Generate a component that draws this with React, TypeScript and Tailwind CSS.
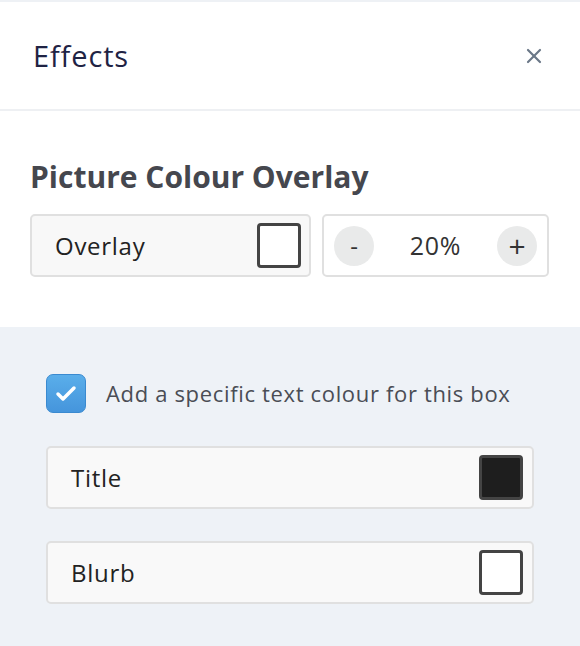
import { Check, X } from "lucide-react";

function Swatch({ fill }: { fill: string }) {
  return (
    <span
      className={`block h-[45px] w-[44px] rounded-[4px] border-[3px] border-[#444] ${fill}`}
    />
  );
}

function ColourRow({ label, fill }: { label: string; fill: string }) {
  return (
    <div className="flex h-[63px] items-center justify-between rounded-[5px] border-2 border-[#e0e0e0] bg-[#f9f9f9] pl-[23px] pr-[9px]">
      <span className="text-[24px] tracking-[0.03em] text-[#222]">{label}</span>
      <Swatch fill={fill} />
    </div>
  );
}

export default function App() {
  return (
    <div
      className="flex h-[646px] w-[580px] flex-col overflow-hidden bg-white"
      style={{ fontFamily: "'Open Sans', Lato, sans-serif" }}
    >
      <div className="h-[2px] bg-[#eef1f5]" />

      {/* header */}
      <div className="flex h-[109px] items-center justify-between border-b-2 border-[#eef0f3] pl-[33px] pr-[34px]">
        <h1 className="text-[29px] leading-none tracking-[0.03em] text-[#1f2344]">Effects</h1>
        <X className="h-[24px] w-[24px] text-[#6b7888]" strokeWidth={2.2} />
      </div>

      {/* overlay */}
      <div className="flex h-[216px] flex-col px-[30px] pt-[51px]">
        <h2 className="text-[30px] font-bold leading-none text-[#45474e]">
          Picture Colour Overlay
        </h2>
        <div className="mt-[22px] flex gap-[11px]">
          <div className="flex h-[63px] w-[281px] items-center justify-between rounded-[5px] border-2 border-[#e0e0e0] bg-[#f8f8f8] pl-[23px] pr-[8px]">
            <span className="text-[24px] tracking-[0.03em] text-[#222]">Overlay</span>
            <Swatch fill="bg-white" />
          </div>
          <div className="flex h-[63px] w-[227px] items-center justify-between rounded-[5px] border-2 border-[#e0e0e0] bg-white px-[10px]">
            <span className="flex h-[40px] w-[40px] items-center justify-center rounded-full bg-[#e9eaea] text-[24px] text-[#333]">
              -
            </span>
            <span className="text-[25px] tracking-[0.03em] text-[#333]">20%</span>
            <span className="flex h-[40px] w-[40px] items-center justify-center rounded-full bg-[#e9eaea] text-[30px] leading-none text-[#333]">
              +
            </span>
          </div>
        </div>
      </div>

      {/* text colours */}
      <div className="flex flex-1 flex-col bg-[#eef2f7] px-[46px] pt-[47px]">
        <label className="flex items-center gap-[20px]">
          <span className="flex h-[39px] w-[40px] items-center justify-center rounded-[7px] border border-[#3a8ad0] bg-gradient-to-b from-[#5aaeea] to-[#4595dc]">
            <Check className="h-[24px] w-[24px] text-white" strokeWidth={3.5} />
          </span>
          <span className="text-[22px] tracking-[0.03em] text-[#4a4d55]">
            Add a specific text colour for this box
          </span>
        </label>
        <div className="mt-[33px] flex flex-col gap-[32px]">
          <ColourRow label="Title" fill="bg-[#1e1e1e]" />
          <ColourRow label="Blurb" fill="bg-white" />
        </div>
      </div>
    </div>
  );
}
